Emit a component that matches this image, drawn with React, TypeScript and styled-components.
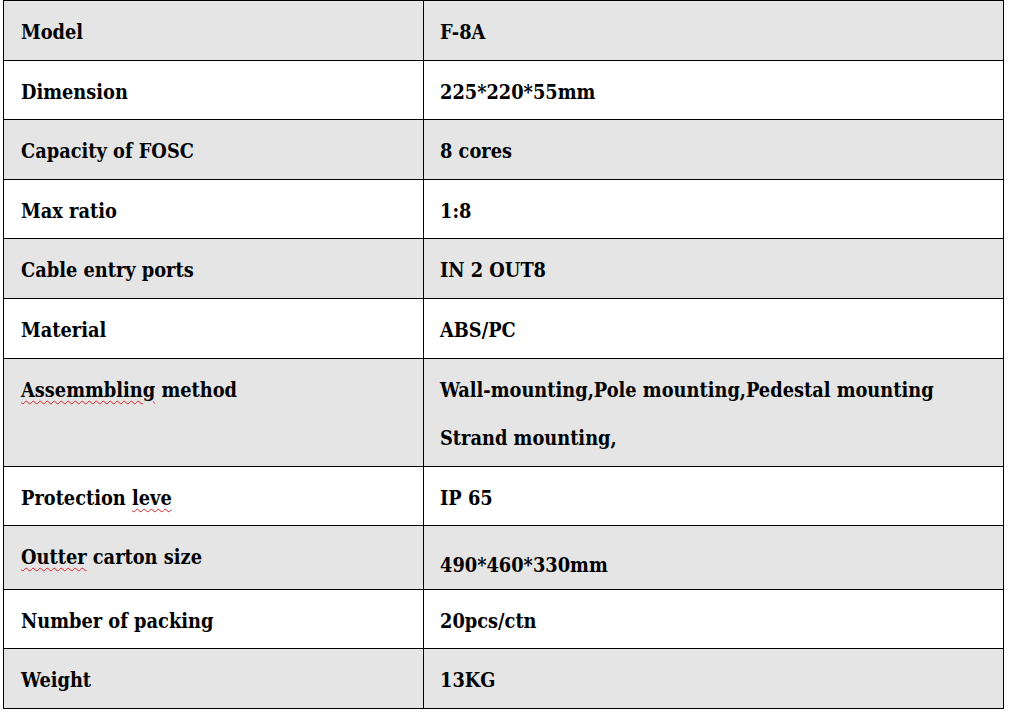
import React from "react";
import styled, { createGlobalStyle } from "styled-components";

const Global = createGlobalStyle`
  html, body { margin: 0; padding: 0; background: #fff; }
  body { font-family: "DejaVu Serif", "Liberation Serif", serif; }
`;

const Table = styled.div`
  margin-left: 3px;
  width: 1001px;
  box-sizing: border-box;
  border: 1px solid #000;
  color: #000;
`;

const Row = styled.div<{ $shade: boolean; $h: number }>`
  display: grid;
  grid-template-columns: 420px 1fr;
  height: ${(p) => p.$h}px;
  background: ${(p) => (p.$shade ? "#e5e5e5" : "#ffffff")};
  & + & { border-top: 1px solid #000; }
`;

const Cell = styled.div<{ $first?: boolean; $offset?: number }>`
  box-sizing: border-box;
  padding: ${(p) => 7 + (p.$offset ?? 0)}px 0 0 ${(p) => (p.$first ? 17 : 16)}px;
  border-right: ${(p) => (p.$first ? "1px solid #000" : "none")};
  font-family: "DejaVu Serif", serif;
  font-stretch: condensed;
  font-weight: 700;
  font-size: 19.8px;
  line-height: 48px;
  white-space: nowrap;
`;

const Misspelled = styled.span`
  text-decoration: underline wavy #e02020;
  text-decoration-thickness: 1px;
  text-underline-offset: 3px;
`;

type Item = { label: React.ReactNode; value: React.ReactNode; h: number; offset?: number };

const rows: Item[] = [
  { label: "Model", value: "F-8A", h: 59 },
  { label: "Dimension", value: "225*220*55mm", h: 58 },
  { label: "Capacity of FOSC", value: "8 cores", h: 59 },
  { label: "Max ratio", value: "1:8", h: 58 },
  { label: "Cable entry ports", value: "IN 2 OUT8", h: 59 },
  { label: "Material", value: "ABS/PC", h: 59 },
  {
    label: (
      <>
        <Misspelled>Assemmbling</Misspelled> method
      </>
    ),
    value: (
      <>
        Wall-mounting,Pole mounting,Pedestal mounting
        <br />
        Strand mounting,
      </>
    ),
    h: 107,
  },
  {
    label: (
      <>
        Protection <Misspelled>leve</Misspelled>
      </>
    ),
    value: "IP 65",
    h: 58,
  },
  {
    label: (
      <>
        <Misspelled>Outter</Misspelled> carton size
      </>
    ),
    value: "490*460*330mm",
    h: 63,
    offset: 8,
  },
  { label: "Number of packing", value: "20pcs/ctn", h: 58 },
  { label: "Weight", value: "13KG", h: 59 },
];

export default function App() {
  return (
    <>
      <Global />
      <Table>
        {rows.map((r, i) => (
          <Row key={i} $shade={i % 2 === 0} $h={r.h}>
            <Cell $first>{r.label}</Cell>
            <Cell $offset={r.offset}>{r.value}</Cell>
          </Row>
        ))}
      </Table>
    </>
  );
}
